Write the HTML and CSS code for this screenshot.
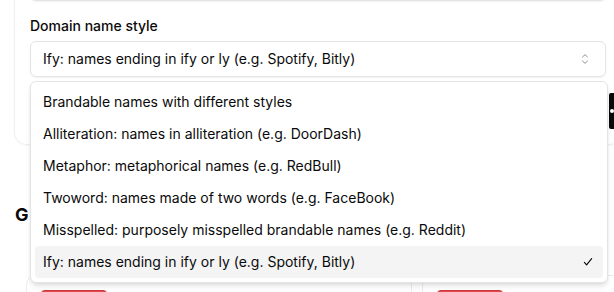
FILE: index.html
```html
<!DOCTYPE html>
<html lang="en">
<head>
<meta charset="utf-8">
<title>Domain name style</title>
<link rel="stylesheet" href="styles.css">
</head>
<body>
<div class="page">
  <section class="card">
    <div class="prev-field"></div>
    <div class="field">
      <label class="label">Domain name style</label>
      <div class="select-wrap">
        <button class="trigger" type="button">
          <span>Ify: names ending in ify or ly (e.g. Spotify, Bitly)</span>
          <svg class="caret" width="16" height="16" viewBox="0 0 15 15" fill="none" stroke="currentColor" stroke-width="0.9" stroke-linecap="round" stroke-linejoin="round"><polyline points="5.2,5.6 7.5,3.4 9.8,5.6"/><polyline points="5.2,9.4 7.5,11.6 9.8,9.4"/></svg>
        </button>
        <div class="menu" role="listbox">
          <div class="item">Brandable names with different styles</div>
          <div class="item">Alliteration: names in alliteration (e.g. DoorDash)</div>
          <div class="item">Metaphor: metaphorical names (e.g. RedBull)</div>
          <div class="item">Twoword: names made of two words (e.g. FaceBook)</div>
          <div class="item">Misspelled: purposely misspelled brandable names (e.g. Reddit)</div>
          <div class="item selected">Ify: names ending in ify or ly (e.g. Spotify, Bitly)
            <span class="check"><svg width="16" height="16" viewBox="0 0 15 15" fill="none" stroke="currentColor" stroke-width="1.2" stroke-linecap="round" stroke-linejoin="round"><polyline points="3.6,7.9 6,10.6 11.4,3.9"/></svg></span>
          </div>
        </div>
      </div>
    </div>
    <div class="actions">
      <div class="keywords"></div>
      <button class="dark-btn" type="button"><span class="dot"></span></button>
    </div>
  </section>

  <h2 class="heading">G</h2>

  <div class="results">
    <div class="result-card"><div class="red-btn"></div></div>
    <div class="result-card"><div class="red-btn"></div></div>
  </div>
</div>
</body>
</html>
```

FILE: styles.css
```css
* { box-sizing: border-box; }

html, body {
  margin: 0;
  padding: 0;
  background: #ffffff;
}

body {
  width: 614px;
  height: 292px;
  overflow: hidden;
  font-family: Inter, "Noto Sans", "Liberation Sans", sans-serif;
  color: #0a0a0a;
  font-size: 14px;
}

.page {
  display: flex;
  flex-direction: column;
  width: 614px;
  height: 292px;
  overflow: hidden;
}

.card {
  margin: -56px 0 0 14px;
  width: 608px;
  flex: 0 0 auto;
  border: 1px solid #efefef;
  border-radius: 12px;
  padding: 20px 15px 15px;
  box-shadow: 0 1px 2px rgba(0, 0, 0, 0.03);
  display: flex;
  flex-direction: column;
}

.prev-field {
  height: 36px;
  border: 1px solid #e4e4e7;
  border-radius: 6px;
  box-shadow: 0 1px 2px rgba(0, 0, 0, 0.06);
}

.field {
  margin-top: 18px;
  display: flex;
  flex-direction: column;
  gap: 8px;
}

.label {
  font-size: 14px;
  line-height: 14px;
  font-weight: 500;
  color: #0a0a0a;
}

.select-wrap {
  position: relative;
}

.trigger {
  width: 576px;
  height: 36px;
  display: flex;
  align-items: center;
  justify-content: space-between;
  padding: 8px 12px;
  border: 1px solid #e4e4e7;
  border-radius: 6px;
  background: #ffffff;
  box-shadow: 0 1px 2px rgba(0, 0, 0, 0.05);
  font: inherit;
  font-size: 14px;
  line-height: 20px;
  color: #0a0a0a;
  text-align: left;
}

.caret {
  color: #8a8a8a;
  flex: 0 0 auto;
}

.menu {
  position: absolute;
  top: calc(100% + 4px);
  left: 0;
  width: 578px;
  z-index: 10;
  background: #ffffff;
  border: 1px solid #e4e4e7;
  border-radius: 6px;
  padding: 4px;
  box-shadow: 0 4px 6px -1px rgba(0, 0, 0, 0.1), 0 2px 4px -2px rgba(0, 0, 0, 0.1);
  display: flex;
  flex-direction: column;
}

.item {
  position: relative;
  height: 32px;
  padding: 6px 32px 6px 8px;
  font-size: 14px;
  line-height: 20px;
  border-radius: 4px;
  color: #0a0a0a;
  white-space: nowrap;
}

.item.selected {
  background: #f4f4f5;
}

.check {
  position: absolute;
  right: 8px;
  top: 0;
  bottom: 0;
  width: 14px;
  display: flex;
  align-items: center;
  justify-content: center;
  color: #0a0a0a;
}

.actions {
  margin-top: 16px;
  display: flex;
  gap: 3px;
}

.keywords {
  flex: 0 0 576px;
  height: 36px;
  border: 1px solid #e4e4e7;
  border-radius: 6px;
}

.dark-btn {
  flex: 0 0 80px;
  height: 36px;
  border: 0;
  border-radius: 2px;
  background: #0a0a0a;
  padding: 0 0 0 1px;
  display: flex;
  align-items: center;
}

.dot {
  width: 4px;
  height: 4px;
  border-radius: 50%;
  background: #ffffff;
}

.heading {
  margin: 56px 0 0 15px;
  font-size: 18px;
  line-height: 28px;
  font-weight: 700;
  color: #0a0a0a;
  white-space: nowrap;
}

.results {
  margin-top: 46px;
  padding-left: 26px;
  display: grid;
  grid-template-columns: 386px 386px;
  gap: 10px;
}

.result-card {
  border: 1px solid #ececec;
  border-radius: 10px;
  padding: 14px;
  height: 80px;
}

.red-btn {
  width: 66px;
  height: 30px;
  border-radius: 4px;
  background: #e5484d;
  border-top: 1px solid #c93b3f;
}
```
